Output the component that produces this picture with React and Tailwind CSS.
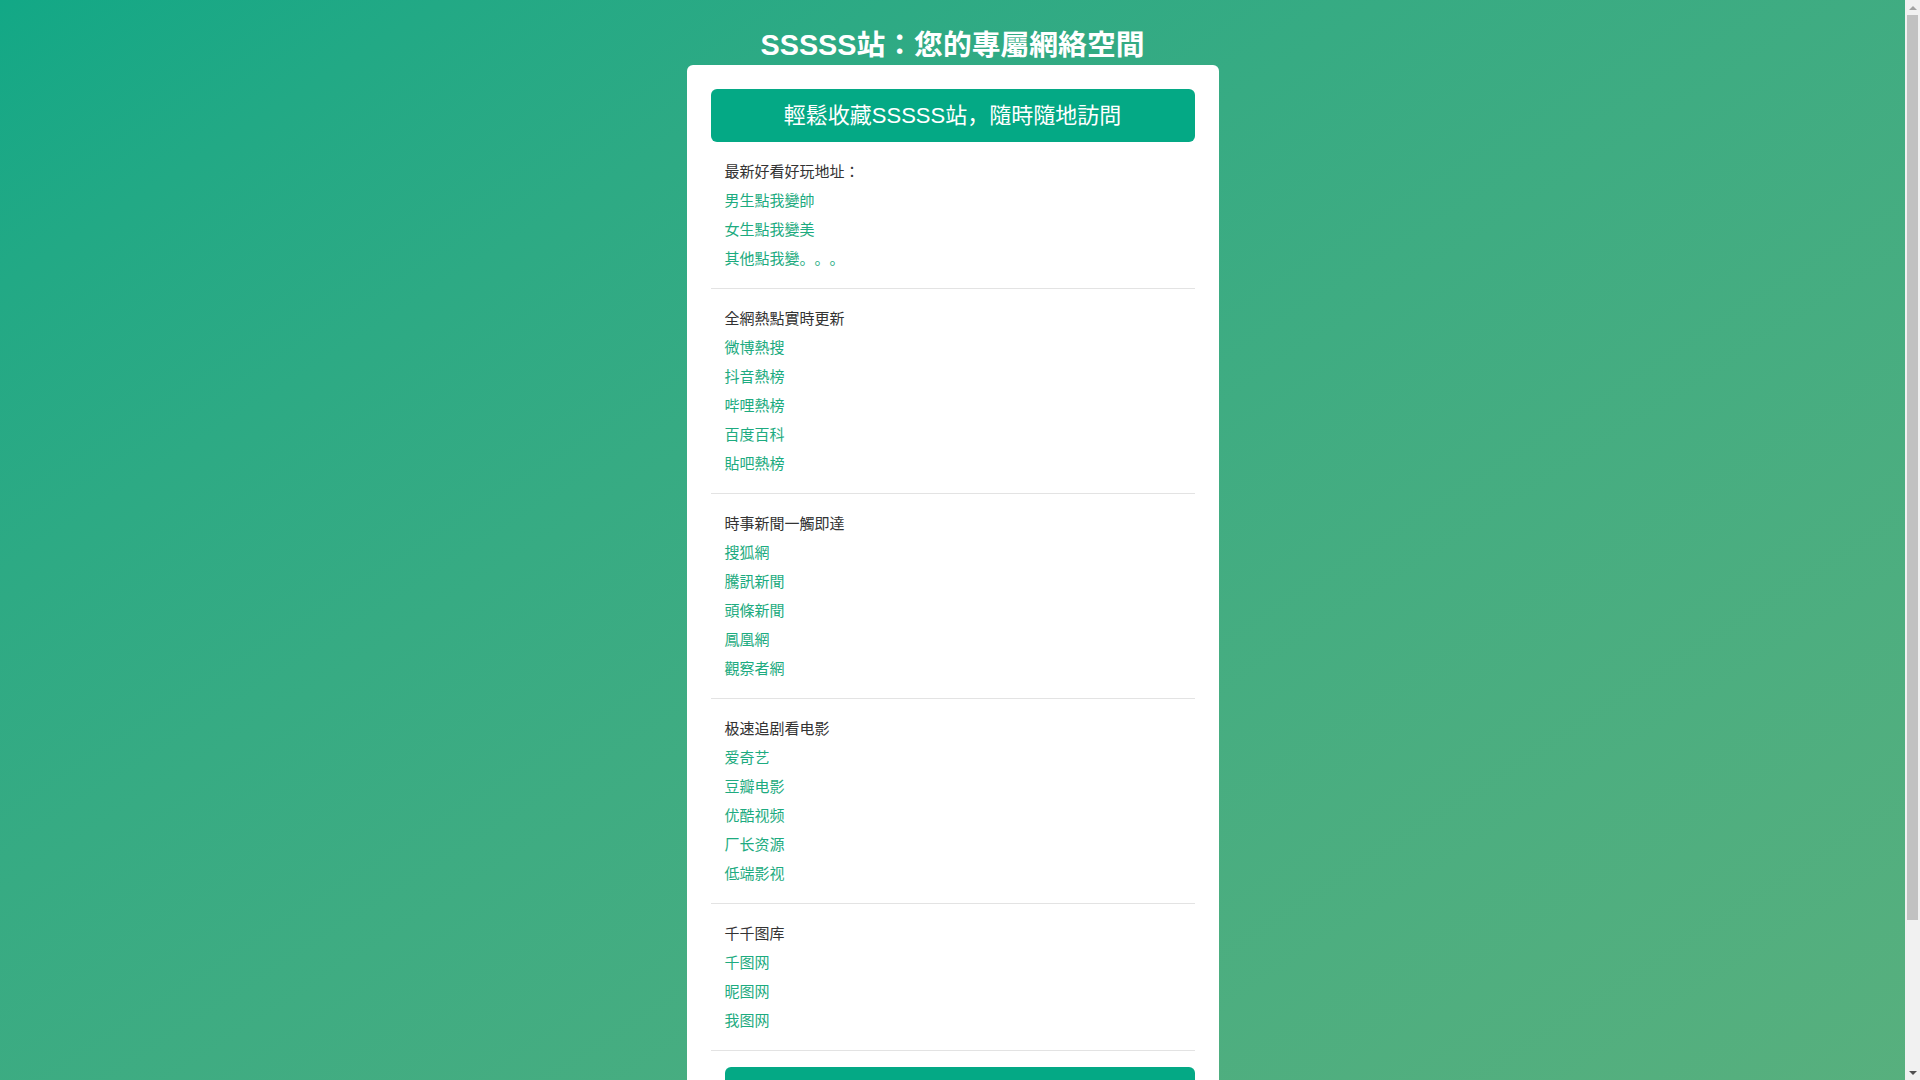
import React from 'react';

const sections = [
  {
    title: '最新好看好玩地址：',
    links: ['男生點我變帥', '女生點我變美', '其他點我變。。。'],
  },
  {
    title: '全網熱點實時更新',
    links: ['微博熱搜', '抖音熱榜', '哔哩熱榜', '百度百科', '貼吧熱榜'],
  },
  {
    title: '時事新聞一觸即達',
    links: ['搜狐網', '騰訊新聞', '頭條新聞', '鳳凰網', '觀察者網'],
  },
  {
    title: '极速追剧看电影',
    links: ['爱奇艺', '豆瓣电影', '优酷视频', '厂长资源', '低端影视'],
  },
  {
    title: '千千图库',
    links: ['千图网', '昵图网', '我图网'],
  },
];

// classic scrollbar drawn at the right, the page itself is clipped
function Scrollbar() {
  return (
    <div className="flex w-[15px] shrink-0 flex-col items-center bg-[#f1f1f1]">
      <div className="flex h-[15px] items-center justify-center">
        <div className="h-0 w-0 border-x-[4px] border-b-[4px] border-x-transparent border-b-[#a3a3a3]" />
      </div>
      <div className="h-[905px] w-[11px] bg-[#c1c1c1]" />
      <div className="flex-1" />
      <div className="flex h-[15px] items-center justify-center">
        <div className="h-0 w-0 border-x-[4px] border-t-[4px] border-x-transparent border-t-[#505050]" />
      </div>
    </div>
  );
}

export default function App() {
  return (
    <div className="flex h-screen overflow-hidden">
      <div className="flex-1 overflow-hidden">
        <div
          className="bg-linear-to-br from-[#12a886] to-[#5ab07d] pt-[26px] pb-[90px] [text-spacing-trim:space-all]"
          style={{ fontFamily: '"Liberation Sans", "Noto Sans CJK JP", sans-serif' }}
        >
          <h1 className="text-center text-[28.8px] font-bold leading-[39px] text-white">
            SSSSS站：您的專屬網絡空間
          </h1>

          <div className="mx-auto w-[532px] rounded-md bg-white p-6">
            <div className="flex h-[53px] items-center justify-center rounded-md bg-[#04a985] text-[22px] text-white">
              輕鬆收藏SSSSS站，隨時隨地訪問
            </div>

            {sections.map((s) => (
              <ul key={s.title} className="border-b border-[#e3e3e3] pl-[14px] pt-[15px] pb-[15px]">
                <li className="text-[15px] leading-[29px] text-[#333]">{s.title}</li>
                {s.links.map((l) => (
                  <li key={l} className="text-[15px] leading-[29px]">
                    <a href="#" className="text-[#1dab80]">
                      {l}
                    </a>
                  </li>
                ))}
              </ul>
            ))}

            <div className="pl-[14px] pt-4">
              <button className="flex h-[46px] w-full items-center justify-center rounded-md bg-[#04a985] text-[18px] text-white">
                收藏本站
              </button>
            </div>
          </div>
        </div>
      </div>
      <Scrollbar />
    </div>
  );
}
